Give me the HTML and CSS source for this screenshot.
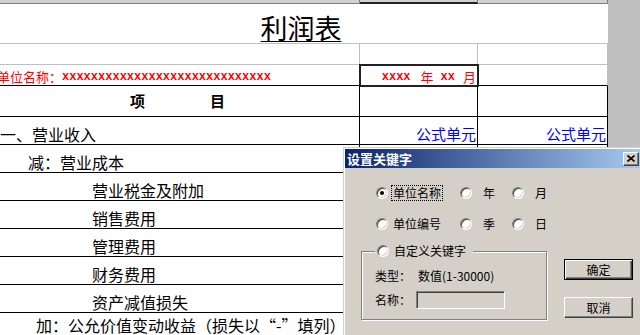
FILE: index.html
```html
<!DOCTYPE html>
<html lang="zh-CN">
<head>
<meta charset="utf-8">
<title>利润表</title>
<link rel="stylesheet" href="styles.css">
</head>
<body>
<div class="screen">
  <div class="sheet">
    <div class="grid colhead">
      <div class="ch"></div><div class="ch sel"></div><div class="ch"></div>
    </div>
    <div class="title-row"><span class="title">利润表</span></div>
    <div class="grid light blank">
      <div class="cell"></div><div class="cell"></div><div class="cell"></div>
    </div>
    <div class="grid light unit">
      <div class="cell red unitname"><span class="cn">单位名称：</span><span class="xs">xxxxxxxxxxxxxxxxxxxxxxxxxxxxx</span></div>
      <div class="cell red date selected"><span class="xs">xxxx</span><span class="yr">年</span><span class="xs xx">xx</span><span class="mo">月</span></div>
      <div class="cell"></div>
    </div>
    <div class="grid dark head">
      <div class="cell hcell"><span>项</span><span>目</span></div><div class="cell"></div><div class="cell"></div>
    </div>
    <div class="grid dark item">
      <div class="cell"><span class="in0">一、营业收入</span></div>
      <div class="cell blue">公式单元</div>
      <div class="cell blue">公式单元</div>
    </div>
    <div class="grid dark item">
      <div class="cell"><span class="in28">减：营业成本</span></div><div class="cell"></div><div class="cell"></div>
    </div>
    <div class="grid dark item">
      <div class="cell"><span class="in92">营业税金及附加</span></div><div class="cell"></div><div class="cell"></div>
    </div>
    <div class="grid dark item">
      <div class="cell"><span class="in92">销售费用</span></div><div class="cell"></div><div class="cell"></div>
    </div>
    <div class="grid dark item">
      <div class="cell"><span class="in92">管理费用</span></div><div class="cell"></div><div class="cell"></div>
    </div>
    <div class="grid dark item">
      <div class="cell"><span class="in92">财务费用</span></div><div class="cell"></div><div class="cell"></div>
    </div>
    <div class="grid dark item">
      <div class="cell"><span class="in92">资产减值损失</span></div><div class="cell"></div><div class="cell"></div>
    </div>
    <div class="grid dark item last">
      <div class="cell"><span class="in36">加：公允价值变动收益（损失以“-”填列）</span></div><div class="cell"></div><div class="cell"></div>
    </div>
  </div>
  <div class="gutter"></div>

  <div class="dialog">
    <div class="titlebar">
      <span class="ttext">设置关键字</span>
      <span class="close"><svg width="8" height="7" viewBox="0 0 8 7"><path d="M0.5 0.5 L7.5 6.5 M7.5 0.5 L0.5 6.5" stroke="#000" stroke-width="1.6" fill="none"/></svg></span>
    </div>
    <div class="dlg-body">
      <div class="leftcol">
        <div class="radios">
          <div class="opt"><span class="radio on"></span><span class="lbl focus">单位名称</span></div>
          <div class="opt short"><span class="radio"></span><span class="lbl">年</span></div>
          <div class="opt short"><span class="radio"></span><span class="lbl">月</span></div>
          <div class="opt"><span class="radio"></span><span class="lbl">单位编号</span></div>
          <div class="opt short"><span class="radio"></span><span class="lbl">季</span></div>
          <div class="opt short"><span class="radio"></span><span class="lbl">日</span></div>
        </div>
        <fieldset class="group">
          <legend class="legend"><span class="radio"></span><span>自定义关键字</span></legend>
          <div class="frow first"><span class="flabel">类型：</span><span class="fval">数值(1-30000)</span></div>
          <div class="frow"><span class="flabel">名称：</span><span class="input"></span></div>
        </fieldset>
      </div>
      <div class="rightcol">
        <div class="btn default">确定</div>
        <div class="btn">取消</div>
      </div>
    </div>
  </div>
</div>
</body>
</html>
```
FILE: styles.css
```css
html, body {
  margin: 0;
  padding: 0;
}
body {
  width: 640px;
  height: 335px;
  overflow: hidden;
  font-family: "Noto Sans CJK SC", sans-serif;
}
.screen {
  position: relative;
  display: flex;
  width: 640px;
  height: 335px;
  overflow: hidden;
}
.sheet {
  width: 608px;
  flex: none;
  background: #fff;
}
.gutter {
  flex: 1;
  background: #c0c0c0;
}
.grid {
  display: grid;
  grid-template-columns: 360px 118px 130px;
}
.cell {
  box-sizing: border-box;
  display: flex;
  align-items: flex-end;
  min-width: 0;
  white-space: nowrap;
}
/* column header strip */
.colhead {
  height: 4px;
}
.ch {
  box-sizing: border-box;
  background: #d0d0d0;
  border-right: 1px solid #808080;
  border-bottom: 1px solid #808080;
}
.ch.sel {
  border-bottom: 2px solid #222;
}
/* title */
.title-row {
  box-sizing: border-box;
  height: 40px;
  border-bottom: 1px solid #c0c0c0;
  display: flex;
  align-items: flex-end;
  justify-content: center;
  padding: 0 6px 2px 0;
}
.title {
  font-size: 27px;
  line-height: 27px;
  color: #000;
  text-decoration: underline;
  text-decoration-thickness: 1px;
  text-underline-offset: 2px;
}
/* light grid rows */
.light .cell {
  border-right: 1px solid #c0c0c0;
  border-bottom: 1px solid #c0c0c0;
}
.blank .cell {
  height: 21px;
}
.unit .cell {
  height: 21px;
  border-bottom-color: #000;
  padding-bottom: 1px;
  line-height: 14px;
}
.red {
  color: #ff0000;
  font-size: 13px;
}
.unitname .cn {
  margin-left: -3px;
}
.xs {
  font-family: "Liberation Mono", monospace;
  font-size: 12px;
  font-weight: bold;
}
.date {
  justify-content: flex-end;
  padding-right: 1px;
}
.selected {
  outline: 2px solid #222;
  outline-offset: -1px;
}
.date .yr { margin-left: 10px; }
.date .xx { margin-left: 7px; }
.date .mo { margin-left: 8px; }
/* table rows with black borders */
.dark .cell {
  border-right: 1px solid #000;
  border-bottom: 1px solid #000;
}
.head .cell {
  height: 31px;
  align-items: center;
}
.hcell {
  font-size: 15px;
  font-weight: bold;
  line-height: 16px;
}
.hcell span:first-child {
  margin-left: 130px;
  margin-right: 65px;
}
.item .cell {
  height: 28px;
  font-size: 16px;
  line-height: 16px;
  padding-bottom: 2px;
  color: #000;
}
.item.last .cell {
  align-items: flex-start;
  padding-top: 4px;
}
.in0 { margin-left: 0; }
.in28 { margin-left: 28px; }
.in36 { margin-left: 36px; }
.in92 { margin-left: 92px; }
.item .blue {
  color: #0000ff;
  font-size: 15px;
  justify-content: flex-end;
  padding-right: 1px;
}
/* dialog */
.dialog {
  position: absolute;
  left: 343px;
  top: 147px;
  width: 300px;
  height: 200px;
  box-sizing: border-box;
  background: #d4d0c8;
  border: 1px solid;
  border-color: #d4d0c8 #404040 #404040 #d4d0c8;
  box-shadow: inset 1px 1px #fff, inset -1px -1px #808080;
  padding: 1px;
  font-size: 12px;
  line-height: 14px;
  color: #000;
}
.titlebar {
  height: 19px;
  display: flex;
  align-items: center;
  justify-content: space-between;
  padding: 0 2px;
  background: linear-gradient(90deg, #0a246a 0%, #a6caf0 100%);
}
.ttext {
  color: #fff;
  font-weight: bold;
  font-size: 13px;
  line-height: 15px;
}
.close {
  box-sizing: border-box;
  width: 16px;
  height: 14px;
  background: #d4d0c8;
  border: 1px solid;
  border-color: #fff #404040 #404040 #fff;
  box-shadow: inset -1px -1px #808080;
  display: flex;
  align-items: center;
  justify-content: center;
  padding-right: 1px;
}
.close svg {
  display: block;
}
.dlg-body {
  display: flex;
  padding-left: 16px;
}
.leftcol {
  width: 186px;
  flex: none;
}
.radios {
  margin-left: 15px;
  padding-top: 16px;
  display: grid;
  grid-template-columns: 84px 52px auto;
  row-gap: 13px;
}
.opt {
  display: flex;
  align-items: center;
  height: 18px;
  gap: 5px;
  white-space: nowrap;
}
.opt.short {
  gap: 11px;
}
.lbl.focus {
  outline: 1px dotted #000;
  outline-offset: 0;
  padding: 0 1px;
  margin-left: -1px;
}
.radio {
  box-sizing: border-box;
  width: 12px;
  height: 12px;
  flex: none;
  border-radius: 50%;
  background: #fff;
  border: 1px solid;
  border-color: #808080 #fff #fff #808080;
  box-shadow: inset 1px 1px #404040, inset -1px -1px #d4d0c8;
  display: flex;
  align-items: center;
  justify-content: center;
}
.radio.on::after {
  content: "";
  width: 4px;
  height: 4px;
  border-radius: 50%;
  background: #000;
}
.group {
  box-sizing: border-box;
  width: 186px;
  margin: 11px 0 0;
  padding: 0 0 10px 13px;
  border: 1px solid #808080;
  box-shadow: 1px 1px 0 #fff, inset 1px 1px 0 #fff;
  min-width: 0;
}
.legend {
  display: flex;
  align-items: center;
  gap: 5px;
  padding: 0 7px 0 2px;
  height: 14px;
  background: #d4d0c8;
  white-space: nowrap;
}
.frow {
  display: flex;
  align-items: center;
  margin-top: 8px;
  white-space: nowrap;
}
.frow.first {
  margin-top: 11px;
}
.flabel {
  width: 41px;
  flex: none;
}
.fval {
  margin-left: 2px;
}
.input {
  box-sizing: border-box;
  width: 89px;
  height: 18px;
  background: #d4d0c8;
  border: 1px solid;
  border-color: #808080 #fff #fff #808080;
  box-shadow: inset 1px 1px #404040, inset -1px -1px #d4d0c8;
}
.rightcol {
  margin-left: 17px;
  padding-top: 91px;
  display: flex;
  flex-direction: column;
  gap: 17px;
}
.btn {
  box-sizing: border-box;
  width: 69px;
  height: 21px;
  background: #d4d0c8;
  border: 1px solid;
  border-color: #fff #404040 #404040 #fff;
  box-shadow: inset -1px -1px #808080;
  display: flex;
  align-items: center;
  justify-content: center;
  font-size: 12px;
  line-height: 14px;
}
.btn.default {
  border-color: #000;
  box-shadow: inset 1px 1px #fff, inset -1px -1px #404040, inset -2px -2px #808080;
}
```
